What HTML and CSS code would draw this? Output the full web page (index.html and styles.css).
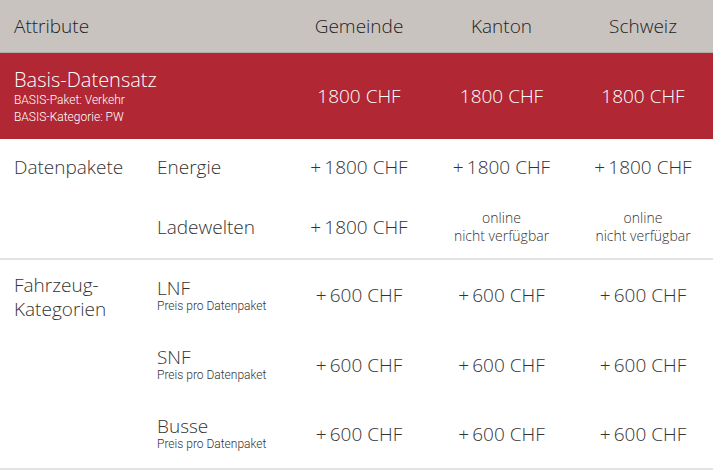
FILE: index.html
```html
<!DOCTYPE html>
<html lang="de">
<head>
<meta charset="utf-8">
<title>Preise</title>
<link rel="stylesheet" href="styles.css">
</head>
<body>
<div class="table">
  <div class="row head">
    <div class="cell c1 span2">Attribute</div>
    <div class="cell val">Gemeinde</div>
    <div class="cell val">Kanton</div>
    <div class="cell val">Schweiz</div>
  </div>
  <div class="row basis">
    <div class="cell c1 span2">
      <div class="title">Basis-Datensatz</div>
      <div class="small">BASIS-Paket: Verkehr</div>
      <div class="small">BASIS-Kategorie: PW</div>
    </div>
    <div class="cell val">1800 CHF</div>
    <div class="cell val">1800 CHF</div>
    <div class="cell val">1800 CHF</div>
  </div>
  <div class="section pakete">
    <div class="group g2">Datenpakete</div>
    <div class="cell c2">Energie</div>
    <div class="cell val">+&#8201;1800 CHF</div>
    <div class="cell val">+&#8201;1800 CHF</div>
    <div class="cell val">+&#8201;1800 CHF</div>
    <div class="cell c2">Ladewelten</div>
    <div class="cell val">+&#8201;1800 CHF</div>
    <div class="cell val note">online<br>nicht verfügbar</div>
    <div class="cell val note">online<br>nicht verfügbar</div>
  </div>
  <div class="section kategorien">
    <div class="group g3">Fahrzeug-<br>Kategorien</div>
    <div class="cell c2"><div class="name">LNF</div><div class="sub">Preis pro Datenpaket</div></div>
    <div class="cell val">+&#8201;600 CHF</div>
    <div class="cell val">+&#8201;600 CHF</div>
    <div class="cell val">+&#8201;600 CHF</div>
    <div class="cell c2"><div class="name">SNF</div><div class="sub">Preis pro Datenpaket</div></div>
    <div class="cell val">+&#8201;600 CHF</div>
    <div class="cell val">+&#8201;600 CHF</div>
    <div class="cell val">+&#8201;600 CHF</div>
    <div class="cell c2"><div class="name">Busse</div><div class="sub">Preis pro Datenpaket</div></div>
    <div class="cell val">+&#8201;600 CHF</div>
    <div class="cell val">+&#8201;600 CHF</div>
    <div class="cell val">+&#8201;600 CHF</div>
  </div>
</div>
</body>
</html>
```
FILE: styles.css
```css
html, body {
  margin: 0;
  padding: 0;
  background: #ffffff;
}
body {
  font-family: "Open Sans", "Liberation Sans", sans-serif;
  font-weight: 300;
  font-size: 19px;
  color: #333333;
}
.table {
  width: 713px;
}
.row, .section {
  display: grid;
  grid-template-columns: 143px 145px 142px 143px 140px;
}
.cell {
  display: flex;
  flex-direction: column;
  justify-content: center;
}
.c1, .c2, .group {
  padding-left: 14px;
}
.span2 {
  grid-column: span 2;
}
.val {
  align-items: center;
  text-align: center;
}
.head {
  height: 52px;
  background: #c9c3c0;
  border-bottom: 1px solid #b2aba8;
  color: #222222;
}
.basis {
  height: 86px;
  background: #b12733;
  color: #ffffff;
}
.basis .title {
  font-size: 20px;
  line-height: 25px;
}
.small {
  font-family: "Roboto", "Liberation Sans", sans-serif;
  font-weight: 300;
  font-size: 12px;
  line-height: 17px;
}
.pakete {
  grid-template-rows: 56px 63px;
  border-bottom: 2px solid #e6e2df;
}
.kategorien {
  grid-template-rows: 70px 69px 69px;
  border-bottom: 2px solid #e6e2df;
}
.group {
  grid-column: 1;
  line-height: 24px;
}
.g2 {
  grid-row: span 2;
  padding-top: 16px;
}
.g3 {
  grid-row: span 3;
  padding-top: 13px;
}
.c2 {
  grid-column: 2;
}
.note {
  font-size: 14px;
  line-height: 18px;
}
.name {
  line-height: 22px;
}
.sub {
  font-family: "Roboto", "Liberation Sans", sans-serif;
  font-weight: 300;
  font-size: 12px;
  line-height: 15px;
}
```
